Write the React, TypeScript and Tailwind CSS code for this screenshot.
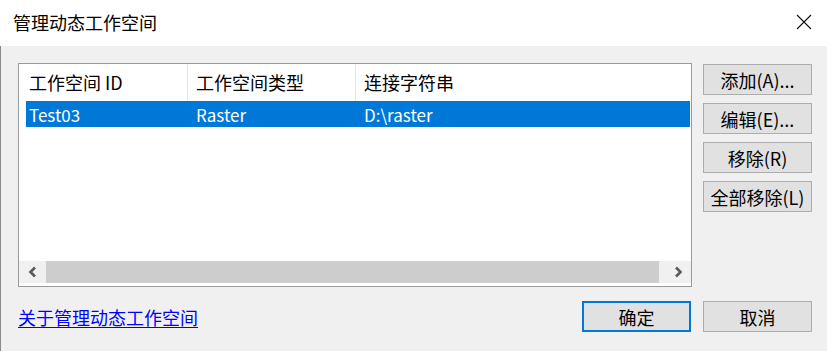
import React from "react";

const font = { fontFamily: '"Noto Sans CJK SC", "Noto Sans", sans-serif' };

function DlgButton({ label, def = false }: { label: string; def?: boolean }) {
    return (
        <button
            type="button"
            className={`flex h-[31px] w-[109px] items-center justify-center bg-[#e1e1e1] text-[18px] leading-none text-black ${def ? "border-2 border-[#0078d7]" : "border border-[#adadad]"}`}
        >
            {label}
        </button>
    );
}

function Chevron({ dir }: { dir: "left" | "right" }) {
    return (
        <svg width="9" height="12" viewBox="0 0 9 12">
            <path
                d={dir === "left" ? "M7 1.5 L2.5 6 L7 10.5" : "M2 1.5 L6.5 6 L2 10.5"}
                fill="none"
                stroke="#5a5a5a"
                strokeWidth="2.6"
            />
        </svg>
    );
}

export default function App() {
    const columns = [
        { title: "工作空间 ID", width: "w-[169px]" },
        { title: "工作空间类型", width: "w-[168px]" },
        { title: "连接字符串", width: "flex-1" },
    ];

    return (
        <div className="flex h-[351px] w-[827px] flex-col overflow-hidden bg-white text-black" style={font}>
            {/* title bar */}
            <div className="flex h-[46px] items-center justify-between pl-[13px] pr-[15px] pb-[2px]">
                <span className="text-[18px] leading-none">管理动态工作空间</span>
                <svg width="16" height="16" viewBox="0 0 16 16">
                    <path d="M1 1 L15 15 M15 1 L1 15" stroke="#111" strokeWidth="1.1" />
                </svg>
            </div>

            <div className="flex flex-1 flex-col border-l border-[#8a8a8a] bg-[#f0f0f0] pl-[17px] pt-[17px]">
                <div className="flex gap-[11px]">
                    {/* list view */}
                    <div className="flex h-[224px] w-[674px] flex-col border border-[#9a9a9a] bg-white pb-[3px]">
                        <div className="flex h-[37px] text-[18px]">
                            {columns.map((c, i) => (
                                <div
                                    key={c.title}
                                    className={`flex items-center ${c.width} ${i === 0 ? "pl-[10px]" : "pl-[8px]"} ${i < 2 ? "border-r border-[#e5e5e5]" : ""}`}
                                >
                                    <span className="leading-none pb-[2px]">{c.title}</span>
                                </div>
                            ))}
                        </div>
                        <div className="ml-[7px] mr-[1px] flex h-[26px] items-center bg-[#0078d7] text-[17px] text-white">
                            <span className="w-[162px] pl-[3px] leading-none">Test03</span>
                            <span className="w-[168px] pl-[8px] leading-none">Raster</span>
                            <span className="flex-1 pl-[8px] leading-none">D:\raster</span>
                        </div>
                        <div className="flex-1" />
                        {/* horizontal scrollbar */}
                        <div className="flex h-[22px] bg-[#f0f0f0]">
                            <div className="flex w-[27px] items-center justify-center">
                                <Chevron dir="left" />
                            </div>
                            <div className="flex flex-1 pr-[6px]">
                                <div className="flex-1 bg-[#cdcdcd]" />
                            </div>
                            <div className="flex w-[26px] items-center justify-center">
                                <Chevron dir="right" />
                            </div>
                        </div>
                    </div>

                    {/* side buttons */}
                    <div className="flex flex-col gap-[8px] pt-[1px]">
                        <DlgButton label="添加(A)..." />
                        <DlgButton label="编辑(E)..." />
                        <DlgButton label="移除(R)" />
                        <DlgButton label="全部移除(L)" />
                    </div>
                </div>

                {/* footer */}
                <div className="mt-[14px] flex items-center">
                    <a href="#" className="flex-1 text-[18px] leading-none text-[#0000ff] underline underline-offset-[2px]">
                        关于管理动态工作空间
                    </a>
                    <div className="flex gap-[12px] pr-[15px]">
                        <DlgButton label="确定" def />
                        <DlgButton label="取消" />
                    </div>
                </div>
            </div>
        </div>
    );
}
